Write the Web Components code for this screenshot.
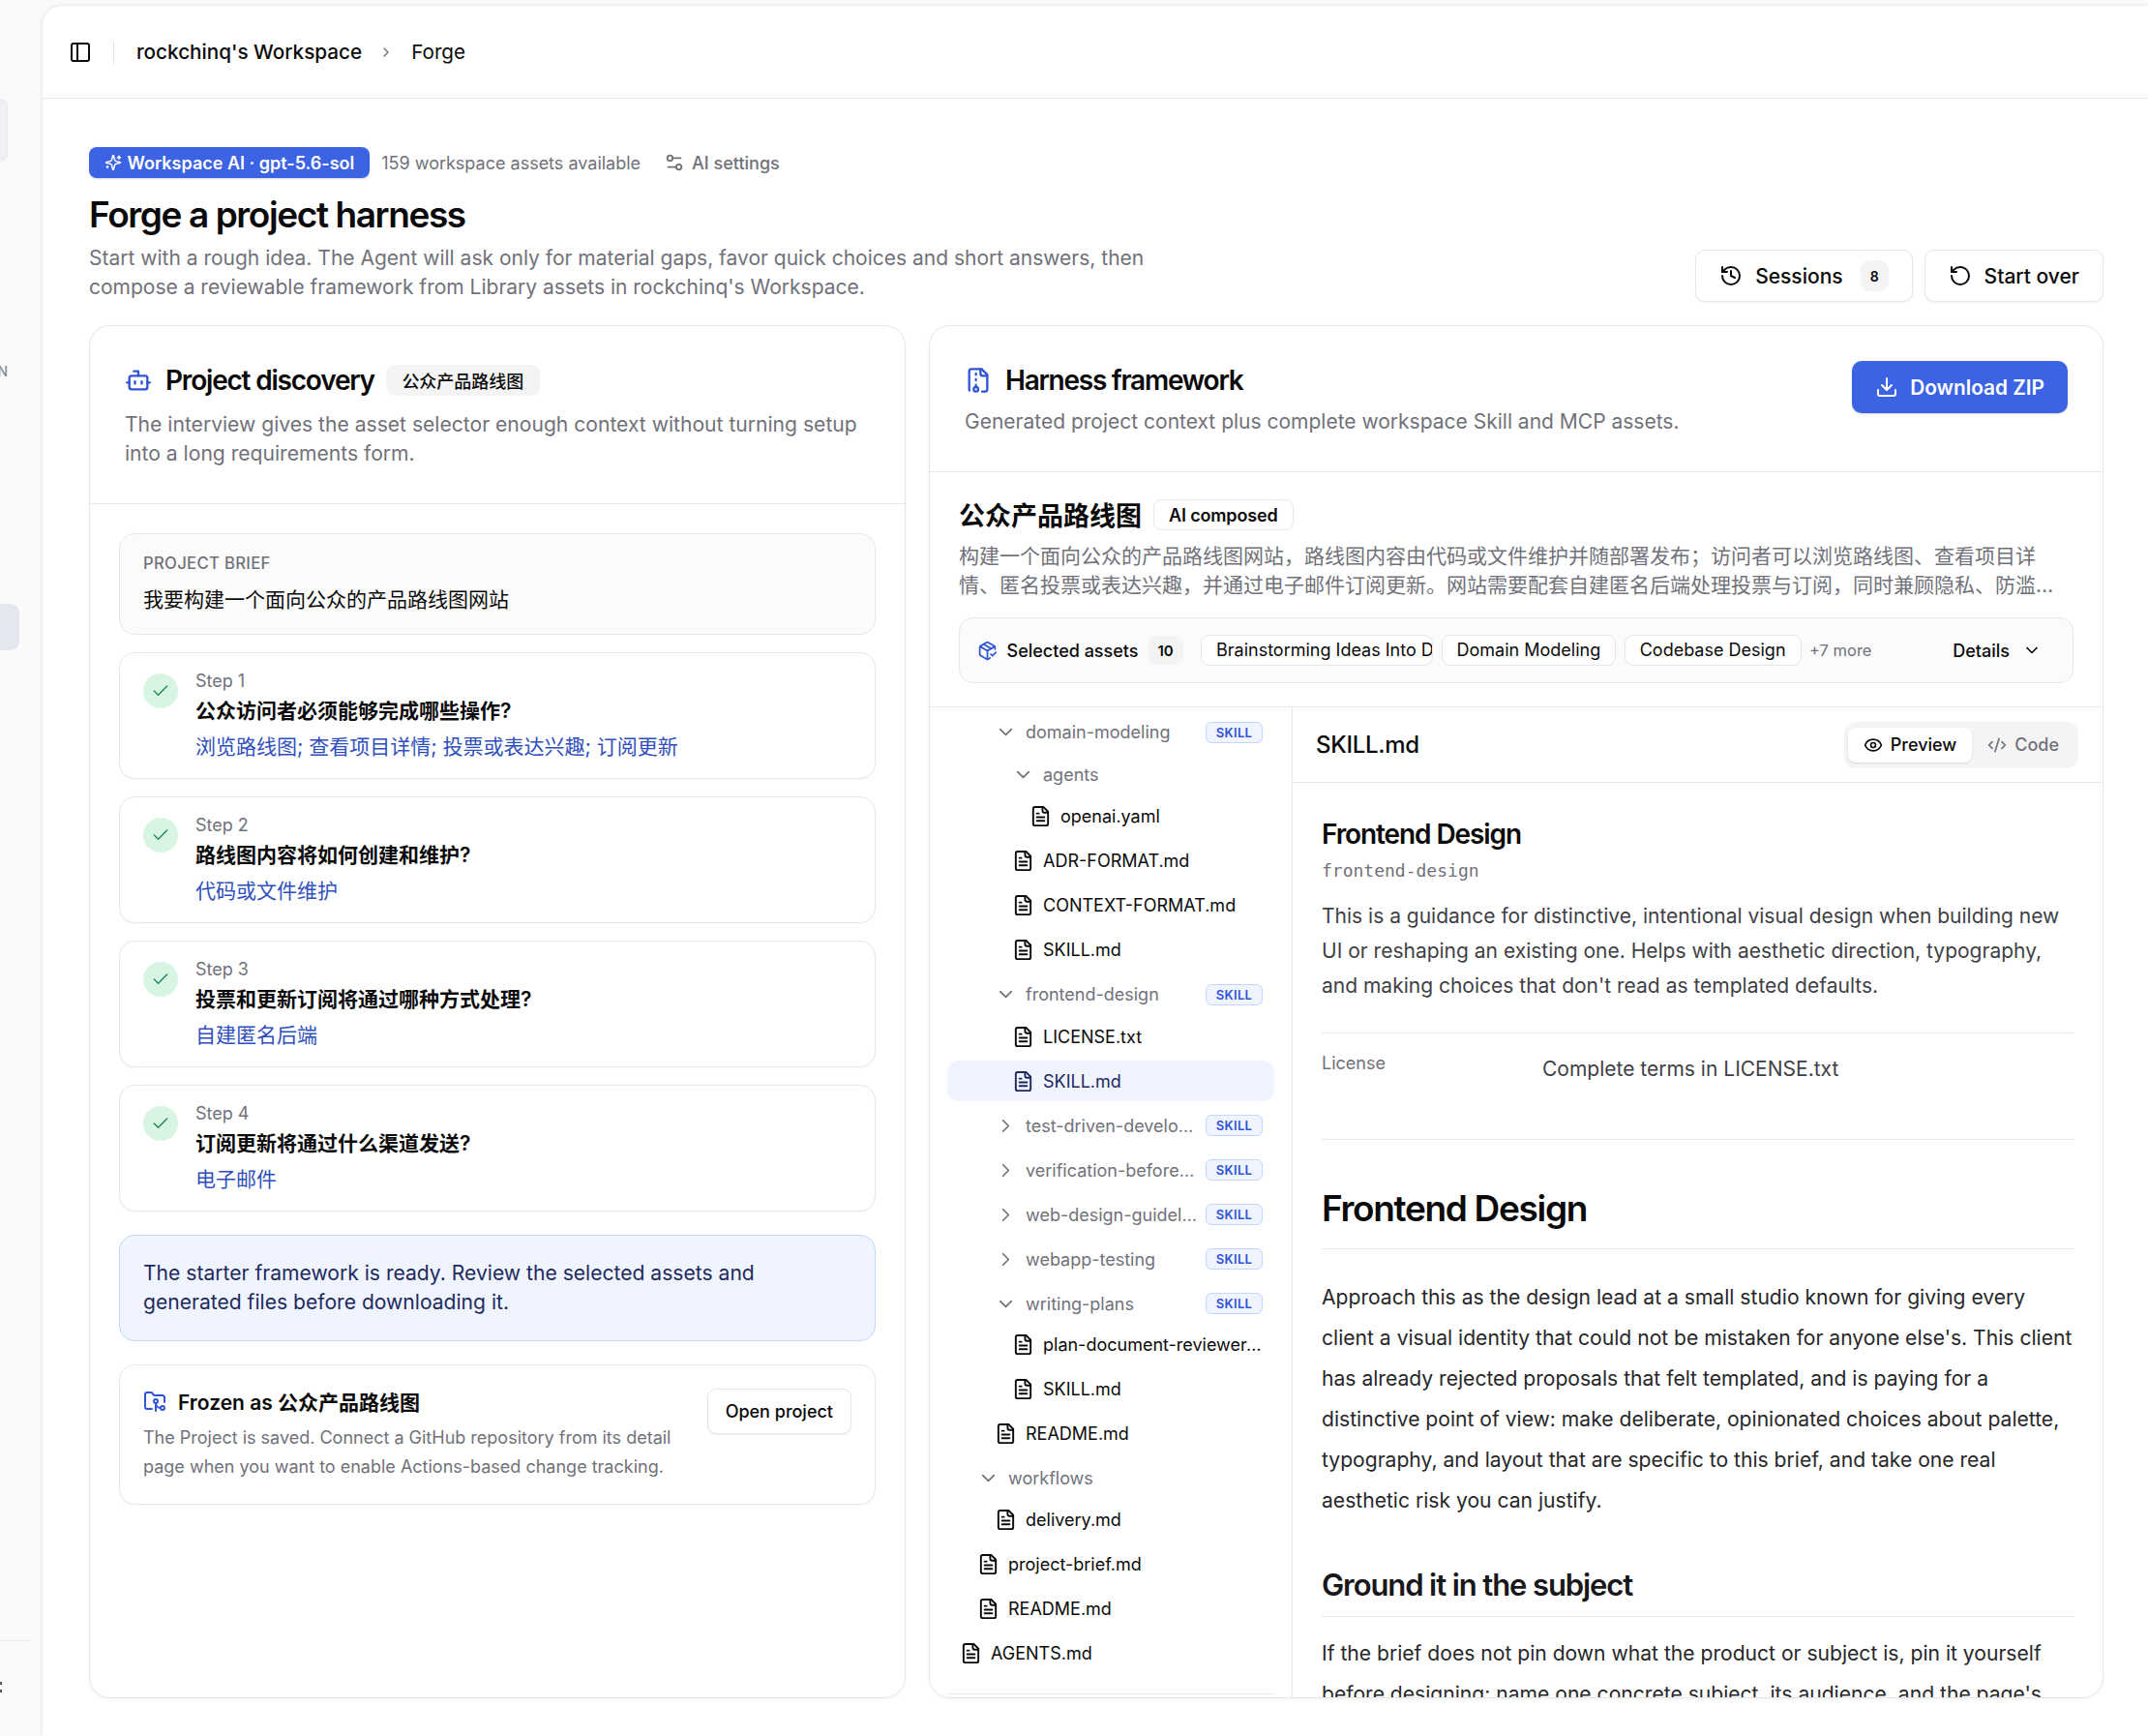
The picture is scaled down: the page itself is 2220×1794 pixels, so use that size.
<!DOCTYPE html>
<html>
<head>
<meta charset="utf-8">
<title>Forge</title>
<style>
  html, body { margin: 0; height: 100%; }
  body {
    font-family: Inter, "Noto Sans CJK SC", sans-serif;
    color: #0a0a0a;
    background: #fafafa;
    overflow: hidden;
  }
</style>
</head>
<body>
<script>
const ICONS = {
  panel: '<rect width="18" height="18" x="3" y="3" rx="2"/><path d="M9 3v18"/>',
  chevronRight: '<path d="m9 18 6-6-6-6"/>',
  chevronDown: '<path d="m6 9 6 6 6-6"/>',
  sparkles: '<path d="M9.937 15.5A2 2 0 0 0 8.5 14.063l-6.135-1.582a.5.5 0 0 1 0-.962L8.5 9.936A2 2 0 0 0 9.937 8.5l1.582-6.135a.5.5 0 0 1 .963 0L14.063 8.5A2 2 0 0 0 15.5 9.937l6.135 1.581a.5.5 0 0 1 0 .964L15.5 14.063a2 2 0 0 0-1.437 1.437l-1.582 6.135a.5.5 0 0 1-.963 0z"/><path d="M20 3v4"/><path d="M22 5h-4"/><path d="M4 17v2"/><path d="M5 18H3"/>',
  settings: '<path d="M14 17H5"/><path d="M19 7h-9"/><circle cx="17" cy="17" r="3"/><circle cx="7" cy="7" r="3"/>',
  history: '<path d="M3 12a9 9 0 1 0 9-9 9.75 9.75 0 0 0-6.74 2.74L3 8"/><path d="M3 3v5h5"/><path d="M12 7v5l4 2"/>',
  rotate: '<path d="M3 12a9 9 0 1 0 9-9 9.75 9.75 0 0 0-6.74 2.74L3 8"/><path d="M3 3v5h5"/>',
  bot: '<path d="M12 8V4H8"/><rect width="16" height="12" x="4" y="8" rx="2"/><path d="M2 14h2"/><path d="M20 14h2"/><path d="M15 13v2"/><path d="M9 13v2"/>',
  archive: '<path d="M10 12v-1"/><path d="M10 18v-2"/><path d="M10 7V6"/><path d="M14 2v4a2 2 0 0 0 2 2h4"/><path d="M15.5 22H18a2 2 0 0 0 2-2V7l-5-5H6a2 2 0 0 0-2 2v16a2 2 0 0 0 .274 1.01"/><circle cx="10" cy="20" r="2"/>',
  download: '<path d="M12 15V3"/><path d="M21 15v4a2 2 0 0 1-2 2H5a2 2 0 0 1-2-2v-4"/><path d="m7 10 5 5 5-5"/>',
  packageCheck: '<path d="m16 16 2 2 4-4"/><path d="M21 10V8a2 2 0 0 0-1-1.73l-7-4a2 2 0 0 0-2 0l-7 4A2 2 0 0 0 3 8v8a2 2 0 0 0 1 1.73l7 4a2 2 0 0 0 2 0l2-1.14"/><path d="m7.5 4.27 9 5.15"/><polyline points="3.29 7 12 12 20.71 7"/><line x1="12" x2="12" y1="22" y2="12"/>',
  check: '<path d="M20 6 9 17l-5-5"/>',
  folderGit: '<path d="M9 20H4a2 2 0 0 1-2-2V5a2 2 0 0 1 2-2h3.9a2 2 0 0 1 1.69.9l.81 1.2a2 2 0 0 0 1.67.9H20a2 2 0 0 1 2 2v5"/><circle cx="13" cy="12" r="2"/><path d="M18 19c-2.8 0-5-2.2-5-5v8"/><circle cx="20" cy="19" r="2"/>',
  file: '<path d="M15 2H6a2 2 0 0 0-2 2v16a2 2 0 0 0 2 2h12a2 2 0 0 0 2-2V7Z"/><path d="M14 2v4a2 2 0 0 0 2 2h4"/><path d="M10 9H8"/><path d="M16 13H8"/><path d="M16 17H8"/>',
  eye: '<path d="M2.062 12.348a1 1 0 0 1 0-.696 10.75 10.75 0 0 1 19.876 0 1 1 0 0 1 0 .696 10.75 10.75 0 0 1-19.876 0"/><circle cx="12" cy="12" r="3"/>',
  code: '<path d="m18 16 4-4-4-4"/><path d="m6 8-4 4 4 4"/><path d="m14.5 4-5 16"/>'
};

class UiIcon extends HTMLElement {
  connectedCallback() {
    const size = this.getAttribute('size') || 20;
    const stroke = this.getAttribute('stroke') || 2;
    this.attachShadow({ mode: 'open' });
    this.shadowRoot.innerHTML = `
      <style>
        :host { display: inline-flex; flex: none; width: ${size}px; height: ${size}px; }
        svg { width: 100%; height: 100%; display: block; }
      </style>
      <svg viewBox="0 0 24 24" fill="none" stroke="currentColor" stroke-width="${stroke}" stroke-linecap="round" stroke-linejoin="round">${ICONS[this.getAttribute('name')] || ''}</svg>
    `;
  }
}
customElements.define('ui-icon', UiIcon);

class AppShell extends HTMLElement {
  connectedCallback() {
    this.attachShadow({ mode: 'open' });
    this.shadowRoot.innerHTML = `
      <style>
        :host { display: flex; height: 1794px; overflow: hidden; background: #fafafa; }
        .main {
          flex: 1;
          min-width: 0;
          margin-top: 6px;
          background: #fff;
          border-top-left-radius: 20px;
          box-shadow: 0 0 4px rgba(0, 0, 0, 0.12);
          display: flex;
          flex-direction: column;
          overflow: hidden;
        }
        .body { flex: 1; min-height: 0; padding: 0 46px 39px 48px; display: flex; flex-direction: column; }
        .columns { flex: 1; min-height: 0; display: grid; grid-template-columns: 844px 1214px; gap: 24px; }
      </style>
      <side-rail></side-rail>
      <div class="main">
        <top-bar></top-bar>
        <div class="body">
          <page-intro></page-intro>
          <div class="columns">
            <discovery-panel></discovery-panel>
            <harness-panel></harness-panel>
          </div>
        </div>
      </div>
    `;
  }
}
customElements.define('app-shell', AppShell);

class SideRail extends HTMLElement {
  connectedCallback() {
    this.attachShadow({ mode: 'open' });
    this.shadowRoot.innerHTML = `
      <style>
        :host { display: flex; flex-direction: column; flex: none; width: 44px; overflow: hidden; background: #fafafa; }
        .workspace { height: 65px; width: 8px; margin-top: 102px; background: #eef0f6; border: 1px solid #e9ebf1; border-left: 0; border-radius: 0 10px 10px 0; box-sizing: border-box; }
        .label { margin-top: 208px; margin-left: -40px; width: 48px; text-align: right; font-size: 14px; line-height: 18px; color: #8a8a93; font-weight: 500; }
        .active { width: 20px; height: 48px; margin-top: 231px; background: #e4e7ef; border-radius: 0 9px 9px 0; }
        .spacer { flex: 1; }
        .rule { width: 32px; height: 1px; background: #ebebeb; margin-bottom: 42px; }
        .more { margin-left: -1px; width: 3px; height: 11px; margin-bottom: 45px; border-top: 3px solid #555; border-bottom: 3px solid #555; box-sizing: border-box; }
      </style>
      <div class="workspace"></div>
      <div class="label">N</div>
      <div class="active"></div>
      <div class="spacer"></div>
      <div class="rule"></div>
      <div class="more"></div>
    `;
  }
}
customElements.define('side-rail', SideRail);

class TopBar extends HTMLElement {
  connectedCallback() {
    this.attachShadow({ mode: 'open' });
    this.shadowRoot.innerHTML = `
      <style>
        :host { display: flex; flex: none; align-items: center; height: 95px; border-bottom: 1px solid #e9e9eb; padding-left: 27px; font-size: 20.7px; color: #0a0a0a; }
        .sep { width: 1px; height: 24px; background: #e5e5e5; margin: 0 23px 0 22px; }
        .name { font-weight: 500; }
        ui-icon.chev { margin: 0 18px 0 17px; color: #71717a; }
      </style>
      <ui-icon name="panel" size="24"></ui-icon>
      <span class="sep"></span>
      <span class="name">rockchinq's Workspace</span>
      <ui-icon class="chev" name="chevronRight" size="16"></ui-icon>
      <span>Forge</span>
    `;
  }
}
customElements.define('top-bar', TopBar);

class PageIntro extends HTMLElement {
  connectedCallback() {
    this.attachShadow({ mode: 'open' });
    this.shadowRoot.innerHTML = `
      <style>
        :host { display: flex; flex: none; justify-content: space-between; align-items: flex-end; padding-top: 50px; margin-bottom: 24px; }
        .meta { display: flex; align-items: center; height: 32px; font-size: 18px; color: #71717a; }
        .badge { display: inline-flex; align-items: center; gap: 6px; height: 32px; padding: 0 15.5px; box-sizing: border-box; background: #3b63e3; color: #fff; border-radius: 8px; font-weight: 600; box-shadow: 0 1px 2px rgba(0,0,0,.15); }
        .count { margin-left: 12.5px; }
        .settings { display: inline-flex; align-items: center; gap: 7px; margin-left: 24px; font-weight: 500; color: #71717a; }
        h1 { margin: 13px 0 0; font-size: 37px; line-height: 50px; font-weight: 600; letter-spacing: -1.4px; color: #0a0a0a; }
        p { margin: 5px 0 0; font-size: 21px; line-height: 30px; color: #71717a; width: 1140px; }
        .actions { display: flex; gap: 12px; }
        .btn { display: inline-flex; align-items: center; height: 54px; box-sizing: border-box; border: 1px solid #e5e5e5; border-radius: 10px; background: #fff; font-size: 21px; font-weight: 500; padding: 0 24px; gap: 13px; box-shadow: 0 1px 2px rgba(0,0,0,.06); }
        .pill { display: inline-flex; align-items: center; justify-content: center; width: 29px; height: 32px; border-radius: 9px; background: #f4f4f5; font-size: 14px; font-weight: 600; margin-left: 5px; }
      </style>
      <div>
        <div class="meta">
          <span class="badge"><ui-icon name="sparkles" size="18"></ui-icon>Workspace AI · gpt-5.6-sol</span>
          <span class="count">159 workspace assets available</span>
          <span class="settings"><ui-icon name="settings" size="22"></ui-icon>AI settings</span>
        </div>
        <h1>Forge a project harness</h1>
        <p>Start with a rough idea. The Agent will ask only for material gaps, favor quick choices and short answers, then compose a reviewable framework from Library assets in rockchinq's Workspace.</p>
      </div>
      <div class="actions">
        <span class="btn"><ui-icon name="history" size="24"></ui-icon>Sessions<span class="pill">8</span></span>
        <span class="btn"><ui-icon name="rotate" size="24"></ui-icon>Start over</span>
      </div>
    `;
  }
}
customElements.define('page-intro', PageIntro);

class StepCard extends HTMLElement {
  connectedCallback() {
    this.attachShadow({ mode: 'open' });
    this.shadowRoot.innerHTML = `
      <style>
        :host { display: flex; gap: 18px; box-sizing: border-box; height: 131px; padding: 16px 24px 0; border: 1px solid #e7e7e9; border-radius: 16px; background: #fff; box-shadow: 0 1px 2px rgba(0,0,0,.03); }
        .tick { flex: none; display: flex; align-items: center; justify-content: center; width: 36px; height: 36px; border-radius: 50%; background: #d8f5e4; color: #1f8a52; margin-top: 5px; }
        .step { font-size: 18px; line-height: 26px; color: #71717a; }
        .q { font-size: 21px; line-height: 36px; font-weight: 600; color: #0a0a0a; }
        .a { font-size: 21px; line-height: 38px; color: #2f4fbd; }
      </style>
      <span class="tick"><ui-icon name="check" size="20" stroke="1.7"></ui-icon></span>
      <div>
        <div class="step"><slot name="step"></slot></div>
        <div class="q"><slot name="q"></slot></div>
        <div class="a"><slot name="a"></slot></div>
      </div>
    `;
  }
}
customElements.define('step-card', StepCard);

class DiscoveryPanel extends HTMLElement {
  connectedCallback() {
    this.attachShadow({ mode: 'open' });
    this.shadowRoot.innerHTML = `
      <style>
        :host { display: flex; flex-direction: column; box-sizing: border-box; min-height: 0; border: 1px solid #e7e7e9; border-radius: 22px; background: #fff; box-shadow: 0 1px 3px rgba(0,0,0,.05); overflow: hidden; }
        header { flex: none; height: 184px; box-sizing: border-box; padding: 39px 36px 0; border-bottom: 1px solid #e9e9eb; }
        .title { display: flex; align-items: center; height: 34px; }
        .bot { color: #2f55d4; margin-right: 14px; }
        h2 { margin: 0; font-size: 28px; font-weight: 600; letter-spacing: -1.2px; color: #0a0a0a; }
        .tag { margin-left: 12px; padding: 0 16.5px; height: 32px; display: inline-flex; align-items: center; border-radius: 9px; background: #f4f4f5; font-size: 18px; font-weight: 500; }
        header p { margin: 14px 0 0; font-size: 21.1px; line-height: 30px; color: #71717a; }
        .content { flex: 1; padding: 30px 30px 0; display: flex; flex-direction: column; }
        .brief { height: 105px; box-sizing: border-box; border: 1px solid #e7e7e9; border-radius: 16px; background: #fbfbfb; padding: 18px 24px 0; margin-bottom: 18px; }
        .brief .label { font-size: 16.7px; line-height: 24px; font-weight: 500; color: #71717a; letter-spacing: 0.3px; }
        .brief .val { margin-top: 11px; font-size: 21px; line-height: 30px; color: #0a0a0a; }
        .steps { display: flex; flex-direction: column; gap: 18px; }
        .ready { margin-top: 24px; height: 110px; box-sizing: border-box; padding: 24px 24px 0; border: 1px solid #c4d7fb; border-radius: 16px; background: #eff4fe; font-size: 21.1px; line-height: 30px; color: #1e2a5e; }
        .frozen { margin-top: 24px; height: 145px; box-sizing: border-box; padding: 22px 24px 0; display: flex; justify-content: space-between; gap: 20px; border: 1px solid #e7e7e9; border-radius: 16px; background: #fff; box-shadow: 0 1px 2px rgba(0,0,0,.03); }
        .frozen h3 { margin: 0; display: flex; align-items: center; gap: 12px; height: 30px; font-size: 21px; font-weight: 600; }
        .frozen h3 ui-icon { color: #2f55d4; }
        .frozen p { margin: 8px 0 0; font-size: 18px; line-height: 30px; color: #71717a; width: 560px; }
        .open { flex: none; display: inline-flex; align-items: center; height: 47px; margin-top: 2px; box-sizing: border-box; padding: 0 18px; border: 1px solid #e5e5e5; border-radius: 9px; font-size: 18px; font-weight: 500; background: #fff; box-shadow: 0 1px 2px rgba(0,0,0,.06); }
      </style>
      <header>
        <div class="title">
          <ui-icon class="bot" name="bot" size="28"></ui-icon>
          <h2>Project discovery</h2>
          <span class="tag">公众产品路线图</span>
        </div>
        <p>The interview gives the asset selector enough context without turning setup into a long requirements form.</p>
      </header>
      <div class="content">
        <div class="brief">
          <div class="label">PROJECT BRIEF</div>
          <div class="val">我要构建一个面向公众的产品路线图网站</div>
        </div>
        <div class="steps">
          <step-card><span slot="step">Step 1</span><span slot="q">公众访问者必须能够完成哪些操作?</span><span slot="a">浏览路线图; 查看项目详情; 投票或表达兴趣; 订阅更新</span></step-card>
          <step-card><span slot="step">Step 2</span><span slot="q">路线图内容将如何创建和维护?</span><span slot="a">代码或文件维护</span></step-card>
          <step-card><span slot="step">Step 3</span><span slot="q">投票和更新订阅将通过哪种方式处理?</span><span slot="a">自建匿名后端</span></step-card>
          <step-card><span slot="step">Step 4</span><span slot="q">订阅更新将通过什么渠道发送?</span><span slot="a">电子邮件</span></step-card>
        </div>
        <div class="ready">The starter framework is ready. Review the selected assets and generated files before downloading it.</div>
        <div class="frozen">
          <div>
            <h3><ui-icon name="folderGit" size="24"></ui-icon>Frozen as 公众产品路线图</h3>
            <p>The Project is saved. Connect a GitHub repository from its detail page when you want to enable Actions-based change tracking.</p>
          </div>
          <span class="open">Open project</span>
        </div>
      </div>
    `;
  }
}
customElements.define('discovery-panel', DiscoveryPanel);

class TreeRow extends HTMLElement {
  connectedCallback() {
    const depth = Number(this.getAttribute('depth') || 0);
    const kind = this.getAttribute('kind') || 'file';
    const icon = kind === 'file' ? 'file' : kind === 'open' ? 'chevronDown' : 'chevronRight';
    const stroke = kind === 'file' ? 2 : 1.8;
    this.attachShadow({ mode: 'open' });
    this.shadowRoot.innerHTML = `
      <style>
        :host { display: flex; align-items: center; height: 42px; box-sizing: border-box; margin: 4px 18px 0; padding: 0 12px 0 ${depth * 18 - 5}px; border-radius: 12px; font-size: 18px; color: ${kind === 'file' ? '#0a0a0a' : '#71717a'}; }
        :host([first]) { margin-top: 1.5px; }
        :host([tight]) { margin-top: 0; }
        :host([selected]) { background: #eff4fe; color: #1e2a5e; }
        .ico { width: 22px; display: flex; justify-content: center; margin-right: 10px; flex: none; }
        .name { flex: 1; min-width: 0; white-space: nowrap; overflow: hidden; text-overflow: ellipsis; }
        .skill { flex: none; margin-left: 8px; width: 59px; height: 22px; box-sizing: border-box; display: inline-flex; align-items: center; justify-content: center; border: 1px solid #c4d7fb; border-radius: 6px; background: #eff4fe; color: #2f55d4; font-size: 13px; font-weight: 600; letter-spacing: 0.3px; }
      </style>
      <span class="ico"><ui-icon name="${icon}" size="23" stroke="${stroke}"></ui-icon></span>
      <span class="name"><slot></slot></span>
      ${this.hasAttribute('skill') ? '<span class="skill">SKILL</span>' : ''}
    `;
  }
}
customElements.define('tree-row', TreeRow);

class FileTree extends HTMLElement {
  connectedCallback() {
    this.attachShadow({ mode: 'open' });
    this.shadowRoot.innerHTML = `
      <style>
        :host { display: flex; flex-direction: column; flex: none; width: 375px; box-sizing: border-box; border-right: 1px solid #e7e7e9; overflow: hidden; }
        .rows { padding-top: 3px; }
        .rule { height: 1px; background: #e7e7e9; margin: 20px 18px 0; }
      </style>
      <div class="rows"><slot></slot></div>
      <div class="rule"></div>
    `;
  }
}
customElements.define('file-tree', FileTree);

class MdPreview extends HTMLElement {
  connectedCallback() {
    this.attachShadow({ mode: 'open' });
    this.shadowRoot.innerHTML = `
      <style>
        :host { display: flex; flex-direction: column; flex: 1; min-width: 0; overflow: hidden; }
        .head { flex: none; display: flex; align-items: center; justify-content: space-between; height: 78px; box-sizing: border-box; padding: 0 25px 0 24px; border-bottom: 1px solid #e9e9eb; }
        .fname { font-size: 24px; font-weight: 500; letter-spacing: -0.3px; }
        .seg { display: flex; align-items: center; height: 48px; padding: 0 4px; box-sizing: border-box; background: #f4f4f5; border-radius: 12px; font-size: 18px; }
        .seg span { display: inline-flex; align-items: center; gap: 8px; height: 36px; padding: 0 16px; border-radius: 8px; font-weight: 500; }
        .seg .on { background: #fff; box-shadow: 0 1px 2px rgba(0,0,0,.12); }
        .seg .off { color: #71717a; }
        .doc { flex: 1; min-height: 0; padding: 35px 30px 0; overflow: hidden; }
        .t { margin: 0; font-size: 28px; line-height: 36px; font-weight: 600; letter-spacing: -1.1px; }
        .slug { margin-top: 9px; font-family: "DejaVu Sans Mono", "Liberation Mono", monospace; font-size: 18px; line-height: 22px; color: #71717a; }
        .lead { margin: 17.5px 0 0; font-size: 21px; line-height: 36px; color: #3f3f46; }
        .lic { margin-top: 30.5px; border-top: 1px solid #e9e9eb; border-bottom: 1px solid #e9e9eb; height: 110.5px; box-sizing: border-box; display: flex; padding-top: 19px; }
        .lic .k { width: 228px; font-size: 18px; line-height: 24px; color: #71717a; flex: none; }
        .lic .v { font-size: 21px; line-height: 30px; margin-top: 3px; color: #3f3f46; }
        h1 { margin: 49px 0 0; padding-bottom: 19px; font-size: 37px; line-height: 44px; font-weight: 600; letter-spacing: -1.33px; border-bottom: 1px solid #e9e9eb; }
        h2 { margin: 46.5px 0 0; padding-bottom: 12px; font-size: 31px; line-height: 40px; font-weight: 600; letter-spacing: -1.1px; color: #18181b; border-bottom: 1px solid #e9e9eb; }
        .doc p.b { margin: 29px 0 0; font-size: 21.1px; line-height: 42px; color: #27272a; }
        h2 + p.b { margin-top: 17px !important; }
      </style>
      <div class="head">
        <span class="fname">SKILL.md</span>
        <div class="seg">
          <span class="on"><ui-icon name="eye" size="20"></ui-icon>Preview</span>
          <span class="off"><ui-icon name="code" size="20"></ui-icon>Code</span>
        </div>
      </div>
      <div class="doc">
        <div class="t">Frontend Design</div>
        <div class="slug">frontend-design</div>
        <p class="lead">This is a guidance for distinctive, intentional visual design when building new UI or reshaping an existing one. Helps with aesthetic direction, typography, and making choices that don't read as templated defaults.</p>
        <div class="lic"><span class="k">License</span><span class="v">Complete terms in LICENSE.txt</span></div>
        <h1>Frontend Design</h1>
        <p class="b">Approach this as the design lead at a small studio known for giving every client a visual identity that could not be mistaken for anyone else's. This client has already rejected proposals that felt templated, and is paying for a distinctive point of view: make deliberate, opinionated choices about palette, typography, and layout that are specific to this brief, and take one real aesthetic risk you can justify.</p>
        <h2>Ground it in the subject</h2>
        <p class="b">If the brief does not pin down what the product or subject is, pin it yourself before designing: name one concrete subject, its audience, and the page's single job.</p>
      </div>
    `;
  }
}
customElements.define('md-preview', MdPreview);

class HarnessPanel extends HTMLElement {
  connectedCallback() {
    this.attachShadow({ mode: 'open' });
    this.shadowRoot.innerHTML = `
      <style>
        :host { display: flex; flex-direction: column; box-sizing: border-box; min-height: 0; border: 1px solid #e7e7e9; border-radius: 22px; background: #fff; box-shadow: 0 1px 3px rgba(0,0,0,.05); overflow: hidden; }
        header { flex: none; height: 151px; box-sizing: border-box; padding: 39px 36px 0; border-bottom: 1px solid #e9e9eb; display: flex; justify-content: space-between; align-items: flex-start; }
        .title { display: flex; align-items: center; height: 34px; }
        .title ui-icon { color: #2f55d4; margin-right: 14px; }
        h2 { margin: 0; font-size: 28px; font-weight: 600; letter-spacing: -1.25px; }
        header p { margin: 10.5px 0 0; font-size: 21px; line-height: 30px; color: #71717a; }
        .dl { display: inline-flex; align-items: center; gap: 12px; height: 54px; padding: 0 24px; box-sizing: border-box; background: #3b63e3; color: #fff; border-radius: 10px; font-size: 20.8px; font-weight: 600; margin-top: -3px; box-shadow: 0 1px 2px rgba(0,0,0,.15); }
        .summary { flex: none; height: 243px; box-sizing: border-box; padding: 26px 30px 0; border-bottom: 1px solid #e9e9eb; }
        .name { display: flex; align-items: center; gap: 12px; height: 34px; }
        .name b { font-size: 27px; font-weight: 600; }
        .name span { display: inline-flex; align-items: center; height: 32px; margin-top: 2px; padding: 0 15px; box-sizing: border-box; border: 1px solid #e7e7e9; border-radius: 8px; font-size: 18px; font-weight: 600; letter-spacing: -0.15px; }
        .desc { margin: 12px 0 0; font-size: 21px; line-height: 30px; color: #71717a; display: -webkit-box; -webkit-line-clamp: 2; -webkit-box-orient: vertical; overflow: hidden; }
        .assets { margin-top: 18px; height: 68px; box-sizing: border-box; display: flex; align-items: center; padding: 0 32px 0 18px; border: 1px solid #e7e7e9; border-radius: 14px; background: #fbfbfb; font-size: 18px; }
        .assets > ui-icon { color: #2f55d4; margin-right: 9.5px; }
        .label { font-weight: 500; white-space: nowrap; }
        .n { flex: none; display: inline-flex; justify-content: center; align-items: center; width: 36px; height: 30px; margin-left: 10px; margin-right: 18.5px; border-radius: 8px; background: #f4f4f5; font-size: 15px; font-weight: 600; }
        .chip { flex: none; display: inline-block; height: 32px; line-height: 30px; box-sizing: border-box; border: 1px solid #e7e7e9; border-radius: 9px; background: #fff; padding: 0 15px; margin-right: 8.5px; white-space: nowrap; overflow: hidden; font-weight: 400; }
        .chip.cut { width: 240px; padding-right: 0; }
        .more { color: #71717a; font-size: 16.5px; white-space: nowrap; }
        .details { margin-left: auto; display: inline-flex; align-items: center; gap: 13px; font-weight: 500; }
        .split { flex: 1; min-height: 0; display: flex; }
      </style>
      <header>
        <div>
          <div class="title"><ui-icon name="archive" size="28"></ui-icon><h2>Harness framework</h2></div>
          <p>Generated project context plus complete workspace Skill and MCP assets.</p>
        </div>
        <span class="dl"><ui-icon name="download" size="24"></ui-icon>Download ZIP</span>
      </header>
      <div class="summary">
        <div class="name"><b>公众产品路线图</b><span>AI composed</span></div>
        <p class="desc">构建一个面向公众的产品路线图网站，路线图内容由代码或文件维护并随部署发布；访问者可以浏览路线图、查看项目详情、匿名投票或表达兴趣，并通过电子邮件订阅更新。网站需要配套自建匿名后端处理投票与订阅，同时兼顾隐私、防滥用和可维护性，并保持页面轻量易读。</p>
        <div class="assets">
          <ui-icon name="packageCheck" size="21"></ui-icon>
          <span class="label">Selected assets</span><span class="n">10</span>
          <span class="chip cut">Brainstorming Ideas Into Design</span>
          <span class="chip">Domain Modeling</span>
          <span class="chip">Codebase Design</span>
          <span class="more">+7 more</span>
          <span class="details">Details <ui-icon name="chevronDown" size="20"></ui-icon></span>
        </div>
      </div>
      <div class="split">
        <file-tree>
          <tree-row depth="3" kind="open" skill first>domain-modeling</tree-row>
          <tree-row depth="4" kind="open" first>agents</tree-row>
          <tree-row depth="5" first>openai.yaml</tree-row>
          <tree-row depth="4">ADR-FORMAT.md</tree-row>
          <tree-row depth="4">CONTEXT-FORMAT.md</tree-row>
          <tree-row depth="4">SKILL.md</tree-row>
          <tree-row depth="3" kind="open" skill>frontend-design</tree-row>
          <tree-row depth="4" first>LICENSE.txt</tree-row>
          <tree-row depth="4" selected>SKILL.md</tree-row>
          <tree-row depth="3" kind="closed" skill>test-driven-development</tree-row>
          <tree-row depth="3" kind="closed" skill>verification-before-completion</tree-row>
          <tree-row depth="3" kind="closed" skill>web-design-guidelines</tree-row>
          <tree-row depth="3" kind="closed" skill>webapp-testing</tree-row>
          <tree-row depth="3" kind="open" skill>writing-plans</tree-row>
          <tree-row depth="4" tight>plan-document-reviewer-prompt.md</tree-row>
          <tree-row depth="4">SKILL.md</tree-row>
          <tree-row depth="3">README.md</tree-row>
          <tree-row depth="2" kind="open">workflows</tree-row>
          <tree-row depth="3" first>delivery.md</tree-row>
          <tree-row depth="2">project-brief.md</tree-row>
          <tree-row depth="2">README.md</tree-row>
          <tree-row depth="1">AGENTS.md</tree-row>
        </file-tree>
        <md-preview></md-preview>
      </div>
    `;
  }
}
customElements.define('harness-panel', HarnessPanel);
</script>
<app-shell></app-shell>
</body>
</html>
